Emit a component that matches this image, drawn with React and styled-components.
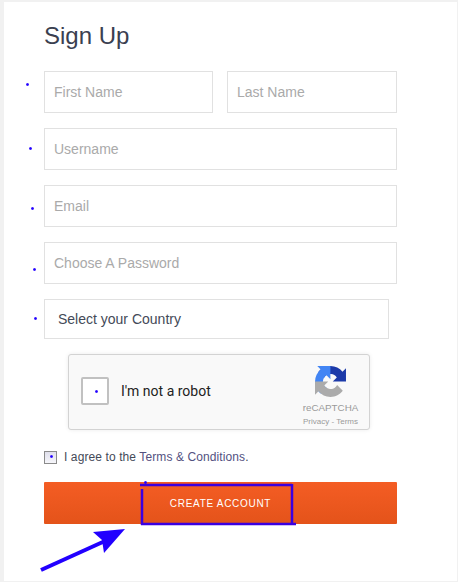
import React from 'react'
import styled, { createGlobalStyle } from 'styled-components'

const GlobalStyle = createGlobalStyle`
html, body {
  margin: 0;
  padding: 0;
  background: #f1f1f1;
}
* { box-sizing: border-box; }
`

// blue marks someone drew on top of the screenshot
const dots = [
  [27, 84], [30, 148], [32, 208], [34, 269], [35, 318], [96, 391], [51, 456], [145, 482],
]

export default function App() {
  return (
    <Page>
      <GlobalStyle />
      <Card>
        <Title>Sign Up</Title>
        <Fields>
          <NameRow>
            <TextInput type="text" placeholder="First Name" />
            <TextInput type="text" placeholder="Last Name" />
          </NameRow>
          <TextInput type="text" placeholder="Username" />
          <TextInput type="text" placeholder="Email" />
          <TextInput type="password" placeholder="Choose A Password" />
          <CountrySelect defaultValue="">
            <option value="">Select your Country</option>
          </CountrySelect>
        </Fields>

        <Captcha>
          <RobotBox />
          <RobotText>I'm not a robot</RobotText>
          <CaptchaBrand>
            <svg width="31" height="31" viewBox="0 0 64 64">
              <path fill="#1c3aa9" d="M64 31.955l-.033-1.37V4.687l-7.16 7.16C50.948 4.674 42.033.093 32.05.093c-10.4 0-19.622 4.96-25.458 12.64l11.736 11.86c1.15-2.127 2.784-3.955 4.77-5.33 2.05-1.6 4.952-2.906 8.95-2.906.484 0 .858.057 1.133.163 4.955.39 9.25 3.125 11.78 7.094l-8.307 8.307c10.52-.04 22.4-.066 27.347.006" />
              <path fill="#4285f4" d="M31.95.003l-1.37.033H4.687l7.16 7.16C4.674 13.055.093 21.97.093 31.953c0 10.4 4.96 19.622 12.64 25.458l11.86-11.736c-2.127-1.15-3.955-2.784-5.33-4.77-1.6-2.05-2.906-4.952-2.906-8.95 0-.484.057-.858.163-1.133.39-4.955 3.125-9.25 7.094-11.78l8.307 8.307c-.04-10.52-.066-22.4.006-27.347" />
              <path fill="#ababab" d="M.002 31.953l.033 1.37v25.9l7.16-7.16c5.86 7.173 14.774 11.754 24.757 11.754 10.4 0 19.622-4.96 25.458-12.64l-11.736-11.86c-1.15 2.127-2.784 3.955-4.77 5.33-2.05 1.6-4.952 2.906-8.95 2.906-.484 0-.858-.057-1.133-.163-4.955-.39-9.25-3.125-11.78-7.094l8.307-8.307c-10.52.04-22.4.066-27.347-.006" />
            </svg>
            <BrandName>reCAPTCHA</BrandName>
            <BrandLinks>Privacy - Terms</BrandLinks>
          </CaptchaBrand>
        </Captcha>

        <Agree>
          <AgreeBox />
          <span>I agree to the <TermsLink href="#">Terms &amp; Conditions</TermsLink>.</span>
        </Agree>

        <CreateButton>CREATE ACCOUNT</CreateButton>
      </Card>

      {dots.map(([x, y]) => <Dot key={x + '-' + y} $x={x} $y={y} />)}
      <ButtonMark width="160" height="47" viewBox="0 0 160 47">
        <g stroke="#3a00e0" strokeWidth="2.5" fill="none">
          <line x1="0" y1="5" x2="152" y2="5" />
          <line x1="2" y1="9" x2="2" y2="45" />
          <line x1="152" y1="4" x2="152" y2="44" />
          <line x1="1" y1="44" x2="156" y2="44" />
        </g>
      </ButtonMark>
      <Arrow width="130" height="60" viewBox="0 0 130 60">
        <line x1="1" y1="48" x2="65" y2="19" stroke="#2200ff" strokeWidth="4" />
        <path fill="#2200ff" d="M85 7 L53 10 L62 18 L64 31 Z" />
      </Arrow>
    </Page>
  )
}

const Page = styled.div`
position: relative;
width: 458px;
height: 582px;
padding: 2px 1px 1px 4px;
overflow: hidden;
font-family: 'Liberation Sans', Arial, sans-serif;
`

const Card = styled.div`
width: 453px;
height: 579px;
background: #fff;
padding: 20px 60px 0 40px;
`

const Title = styled.h1`
margin: 0 0 22px;
height: 27px;
font-size: 24px;
line-height: 27px;
font-weight: 400;
color: #3a4050;
`

const Fields = styled.div`
display: flex;
flex-direction: column;
gap: 15px;
`

const NameRow = styled.div`
display: grid;
grid-template-columns: 169px 170px;
gap: 14px;
`

const TextInput = styled.input`
display: block;
width: 100%;
height: 42px;
padding: 0 9px;
border: 1.5px solid #e1e1e1;
border-radius: 0;
outline: none;
background: #fff;
font-family: inherit;
font-size: 14px;
color: #444;

&::placeholder {
  color: #aaa;
  opacity: 1;
}
`

const CountrySelect = styled.select`
appearance: none;
display: block;
width: 345px;
height: 40px;
padding: 0 13px;
border: 1.5px solid #e1e1e1;
border-radius: 0;
outline: none;
background: #fff;
font-family: inherit;
font-size: 14px;
color: #444a58;
`

const Captcha = styled.div`
display: flex;
align-items: center;
width: 302px;
height: 76px;
margin: 15px 0 0 24px;
padding: 0 12px 2px 12px;
background: #f9f9f9;
border: 1px solid #d3d3d3;
border-radius: 3px;
box-shadow: 0 0 4px rgba(0, 0, 0, 0.08);
`

const RobotBox = styled.div`
width: 28px;
height: 28px;
background: #fff;
border: 2px solid #c1c1c1;
border-radius: 2px;
`

const RobotText = styled.div`
margin-left: 12px;
font-family: Roboto, sans-serif;
font-size: 14px;
color: #222;
`

const CaptchaBrand = styled.div`
display: flex;
flex-direction: column;
align-items: center;
margin-left: auto;
margin-right: -1px;
padding-top: 11px;
width: 55px;
`

const BrandName = styled.div`
margin-top: 4px;
font-size: 9.8px;
line-height: 13px;
color: #999;
white-space: nowrap;
`

const BrandLinks = styled.div`
margin-top: 2px;
font-size: 8px;
line-height: 11px;
color: #999;
white-space: nowrap;
`

const Agree = styled.label`
display: flex;
align-items: center;
gap: 7px;
height: 16px;
margin: 19px 0 0 0;
font-size: 12px;
letter-spacing: 0.1px;
color: #444a58;
`

const AgreeBox = styled.span`
display: block;
width: 13px;
height: 13px;
background: linear-gradient(#dfdfec, #f6f6fa);
border: 1.5px solid #8b8b8b;
`

const TermsLink = styled.a`
color: #53517f;
text-decoration: none;
`

const CreateButton = styled.button`
display: block;
width: 353px;
height: 42px;
margin-top: 17px;
border: none;
border-radius: 1px;
background: linear-gradient(#f45d24, #e4531a);
font-family: inherit;
font-size: 10px;
letter-spacing: 0.7px;
color: #fff;
cursor: pointer;
`

const Dot = styled.span`
position: absolute;
left: ${p => p.$x - 1}px;
top: ${p => p.$y - 1}px;
width: 3px;
height: 3px;
background: radial-gradient(circle, #2200ff 0 40%, rgba(34, 0, 255, 0.25) 75%, transparent 100%);
`

const ButtonMark = styled.svg`
position: absolute;
left: 140px;
top: 480px;
`

const Arrow = styled.svg`
position: absolute;
left: 40px;
top: 522px;
`
